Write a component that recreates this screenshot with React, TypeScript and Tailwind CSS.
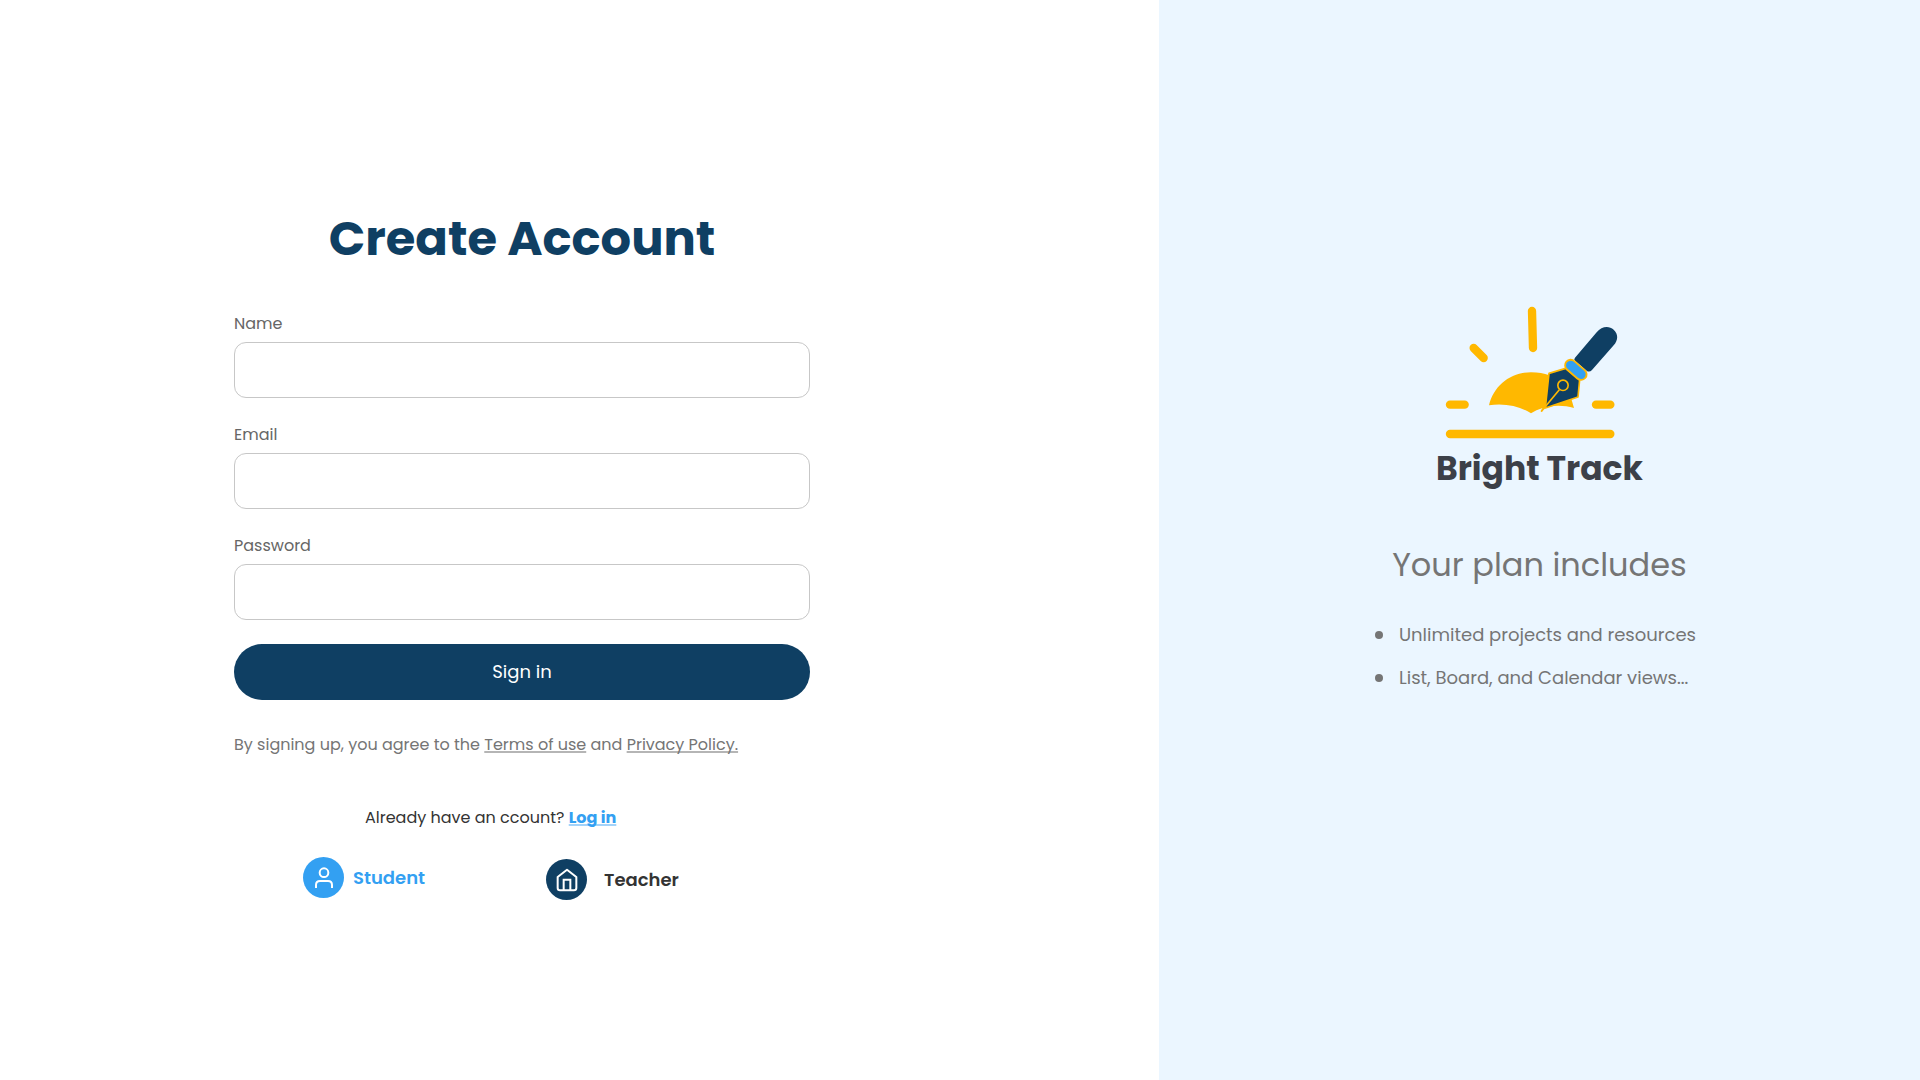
import React from "react";

const fields = [
  { id: "name", label: "Name", type: "text" },
  { id: "email", label: "Email", type: "email" },
  { id: "password", label: "Password", type: "password" },
];

const planFeatures = ["Unlimited projects and resources", "List, Board, and Calendar views..."];

function LogoMark() {
  return (
    <svg viewBox="57 48 603 399" className="h-[133px] w-[201px]" fill="none" aria-hidden="true">
      <g stroke="#ffb800" strokeWidth="25" strokeLinecap="round">
        <path d="M336 63 339 174" />
        <path d="M161 174 191 204" />
        <path d="M90 344H134" />
        <path d="M528 344H571" />
        <path d="M90 432H571" />
      </g>
      <path
        d="M207 346C221 288 270 247 333 247C355 247 372 250 388 256L455 330L462 354C436 347 410 345 383 351L366 355C355 358 344 363 333 370C300 349 255 339 207 346Z"
        fill="#ffb800"
      />
      <path d="M372 353 365 363" stroke="#ffb800" strokeWidth="6" strokeLinecap="round" />
      <path
        d="M465 203 530 127C545 108 567 106 581 119C595 132 595 150 581 166L516 240Q508 248 500 242L466 213Q460 208 465 203Z"
        fill="#0f3f63"
      />
      <path d="M387 250 437 235 479 269 474 321 376 354Z" fill="#0f3f63" stroke="#ffb800" strokeWidth="5" strokeLinejoin="round" />
      <path d="M452 226 483 253" stroke="#ffb800" strokeWidth="39" strokeLinecap="round" />
      <path d="M452 226 483 253" stroke="#33a0f2" strokeWidth="28" strokeLinecap="round" />
      <path d="M418 299 370 357" stroke="#ffb800" strokeWidth="5" />
      <circle cx="429" cy="286" r="15.5" stroke="#ffb800" strokeWidth="5" />
    </svg>
  );
}

function StudentIcon() {
  return (
    <svg viewBox="0 0 123 123" className="size-[41px] shrink-0" fill="none" aria-hidden="true">
      <circle cx="61.5" cy="61.5" r="61.5" fill="#33a0f2" />
      <g stroke="#fff" strokeWidth="6">
        <circle cx="63" cy="47" r="13" />
        <path d="M39 93V84Q39 72 51 72H75Q87 72 87 84V93" />
      </g>
    </svg>
  );
}

function TeacherIcon() {
  return (
    <svg viewBox="0 0 123 123" className="size-[41px] shrink-0" fill="none" aria-hidden="true">
      <circle cx="61.5" cy="61.5" r="61.5" fill="#0f3f63" />
      <g stroke="#fff" strokeWidth="6" strokeLinejoin="round">
        <path d="M35 54 63 32 91 54V87Q91 94 84 94H42Q35 94 35 87Z" />
        <path d="M53 94V62H73V94" strokeLinejoin="miter" />
      </g>
    </svg>
  );
}

export default function App() {
  return (
    <div className="flex min-h-screen bg-white font-['Poppins','Inter',sans-serif] text-[#666]">
      <main className="flex-1 pt-[203px] pl-[234px]">
        <div className="max-w-[576px]">
          <h1 className="text-center text-5xl leading-[72px] font-bold text-[#0f3f63]">Create Account</h1>
          <form className="mt-9" onSubmit={(e) => e.preventDefault()}>
            <div className="flex flex-col gap-6">
              {fields.map((f) => (
                <div key={f.id} className="flex flex-col gap-[5px]">
                  <label htmlFor={f.id} className="text-base leading-[26px]">{f.label}</label>
                  <input
                    id={f.id}
                    type={f.type}
                    className="h-14 w-full rounded-xl border border-[#c7c7c7] bg-white px-4 text-base text-[#333] outline-none focus:border-[#0f3f63]"
                  />
                </div>
              ))}
            </div>
            <button type="submit" className="mt-6 h-14 w-full rounded-full bg-[#0f3f63] text-lg text-white">
              Sign in
            </button>
          </form>
          <p className="mt-8 text-base leading-[26px] whitespace-nowrap text-[#757575]">
            By signing up, you agree to the{" "}
            <a href="#terms" className="underline decoration-[#b5b5b5] decoration-2 underline-offset-1 [text-decoration-skip-ink:none]">Terms of use</a> and{" "}
            <a href="#privacy" className="underline decoration-[#b5b5b5] decoration-2 underline-offset-1 [text-decoration-skip-ink:none]">Privacy Policy.</a>
          </p>
          <p className="mt-[47px] pl-[131px] text-base leading-[26px] whitespace-nowrap text-[#333]">
            Already have an ccount?{" "}
            <a href="#login" className="font-bold text-[#33a0f2] underline decoration-[#a3d3fa] decoration-2 underline-offset-1 [text-decoration-skip-ink:none]">
              Log in
            </a>
          </p>
          <div className="mt-[26px] flex items-start pl-[69px] text-lg leading-[27px] font-semibold">
            <a href="#student" className="flex w-[243px] items-center gap-[9px] text-[#33a0f2]">
              <StudentIcon />
              Student
            </a>
            <a href="#teacher" className="mt-0.5 flex items-center gap-[17px] text-[#333]">
              <TeacherIcon />
              Teacher
            </a>
          </div>
        </div>
      </main>
      <aside className="flex w-[39.64%] flex-col items-center bg-[#ebf6ff] pt-[306px] text-[#757575]">
        <LogoMark />
        <p className="mt-2 text-[33px] leading-[44px] font-bold whitespace-nowrap text-[#3c4048]">Bright Track</p>
        <h2 className="mt-[50px] text-[32px] leading-[48px]">Your plan includes</h2>
        <ul className="mt-8 mr-2 flex flex-col gap-4 text-lg leading-[27px]">
          {planFeatures.map((item) => (
            <li key={item} className="flex items-center gap-4">
              <span className="size-2 rounded-full bg-[#757575]" />
              {item}
            </li>
          ))}
        </ul>
      </aside>
    </div>
  );
}
